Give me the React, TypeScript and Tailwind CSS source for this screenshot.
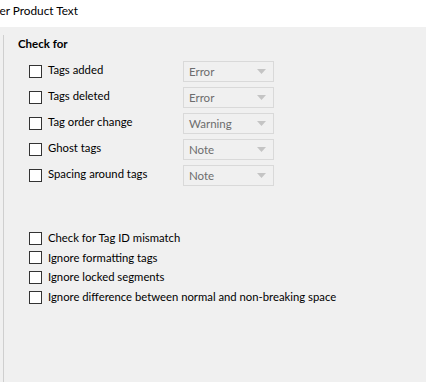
import React from "react";

const font = { fontFamily: 'Lato, "Noto Sans", sans-serif' };

function Box() {
  return <span className="block w-[13px] h-[13px] border border-[#333333] bg-white shrink-0" />;
}

function Select({ value }: { value: string }) {
  return (
    <div className="w-[91px] h-[21px] border border-[#d9d9d9] flex items-center justify-between pl-[5px] pr-[7px]">
      <span className="text-[11.5px] text-[#6d6d6d] leading-none mt-[1px]">{value}</span>
      <svg width="9" height="5" viewBox="0 0 9 5"><path d="M0 0H9L4.5 5Z" fill="#c4c4c4" /></svg>
    </div>
  );
}

const rows1 = [
  ["Tags added", "Error"],
  ["Tags deleted", "Error"],
  ["Tag order change", "Warning"],
  ["Ghost tags", "Note"],
  ["Spacing around tags", "Note"],
];

const rows2 = [
  "Check for Tag ID mismatch",
  "Ignore formatting tags",
  "Ignore locked segments",
  "Ignore difference between normal and non-breaking space",
];

export default function App() {
  return (
    <div className="w-[426px] h-[382px] overflow-hidden flex flex-col bg-[#f0f0f0] text-black" style={font}>
      <div className="h-[27px] bg-white shrink-0 flex items-center overflow-hidden">
        <span className="text-[11.8px] ml-[-17px] -mt-[5px] leading-none whitespace-nowrap">Filter Product Text</span>
      </div>
      <div className="flex-1 flex flex-col pl-[3px]">
        <div className="flex-1 mt-[8px] border-l border-[#cfcfcf] flex flex-col">
          <div className="pl-[14px] pt-[1px] text-[11.5px] font-bold leading-[16px]">Check for</div>
          <div className="flex flex-col gap-[5px] mt-[9px] pl-[25px]">
            {rows1.map(([l, v]) => (
              <div key={l} className="flex items-center h-[21px]">
                <Box />
                <span className="ml-[6px] w-[135px] text-[11.3px] leading-none -mt-[4px]">{l}</span>
                <Select value={v} />
              </div>
            ))}
          </div>
          <div className="flex flex-col gap-[5.7px] mt-[45px] pl-[25px]">
            {rows2.map((l) => (
              <div key={l} className="flex items-center h-[14px]">
                <Box />
                <span className="ml-[6px] text-[11.3px] leading-none -mt-[1px]">{l}</span>
              </div>
            ))}
          </div>
        </div>
      </div>
    </div>
  );
}
